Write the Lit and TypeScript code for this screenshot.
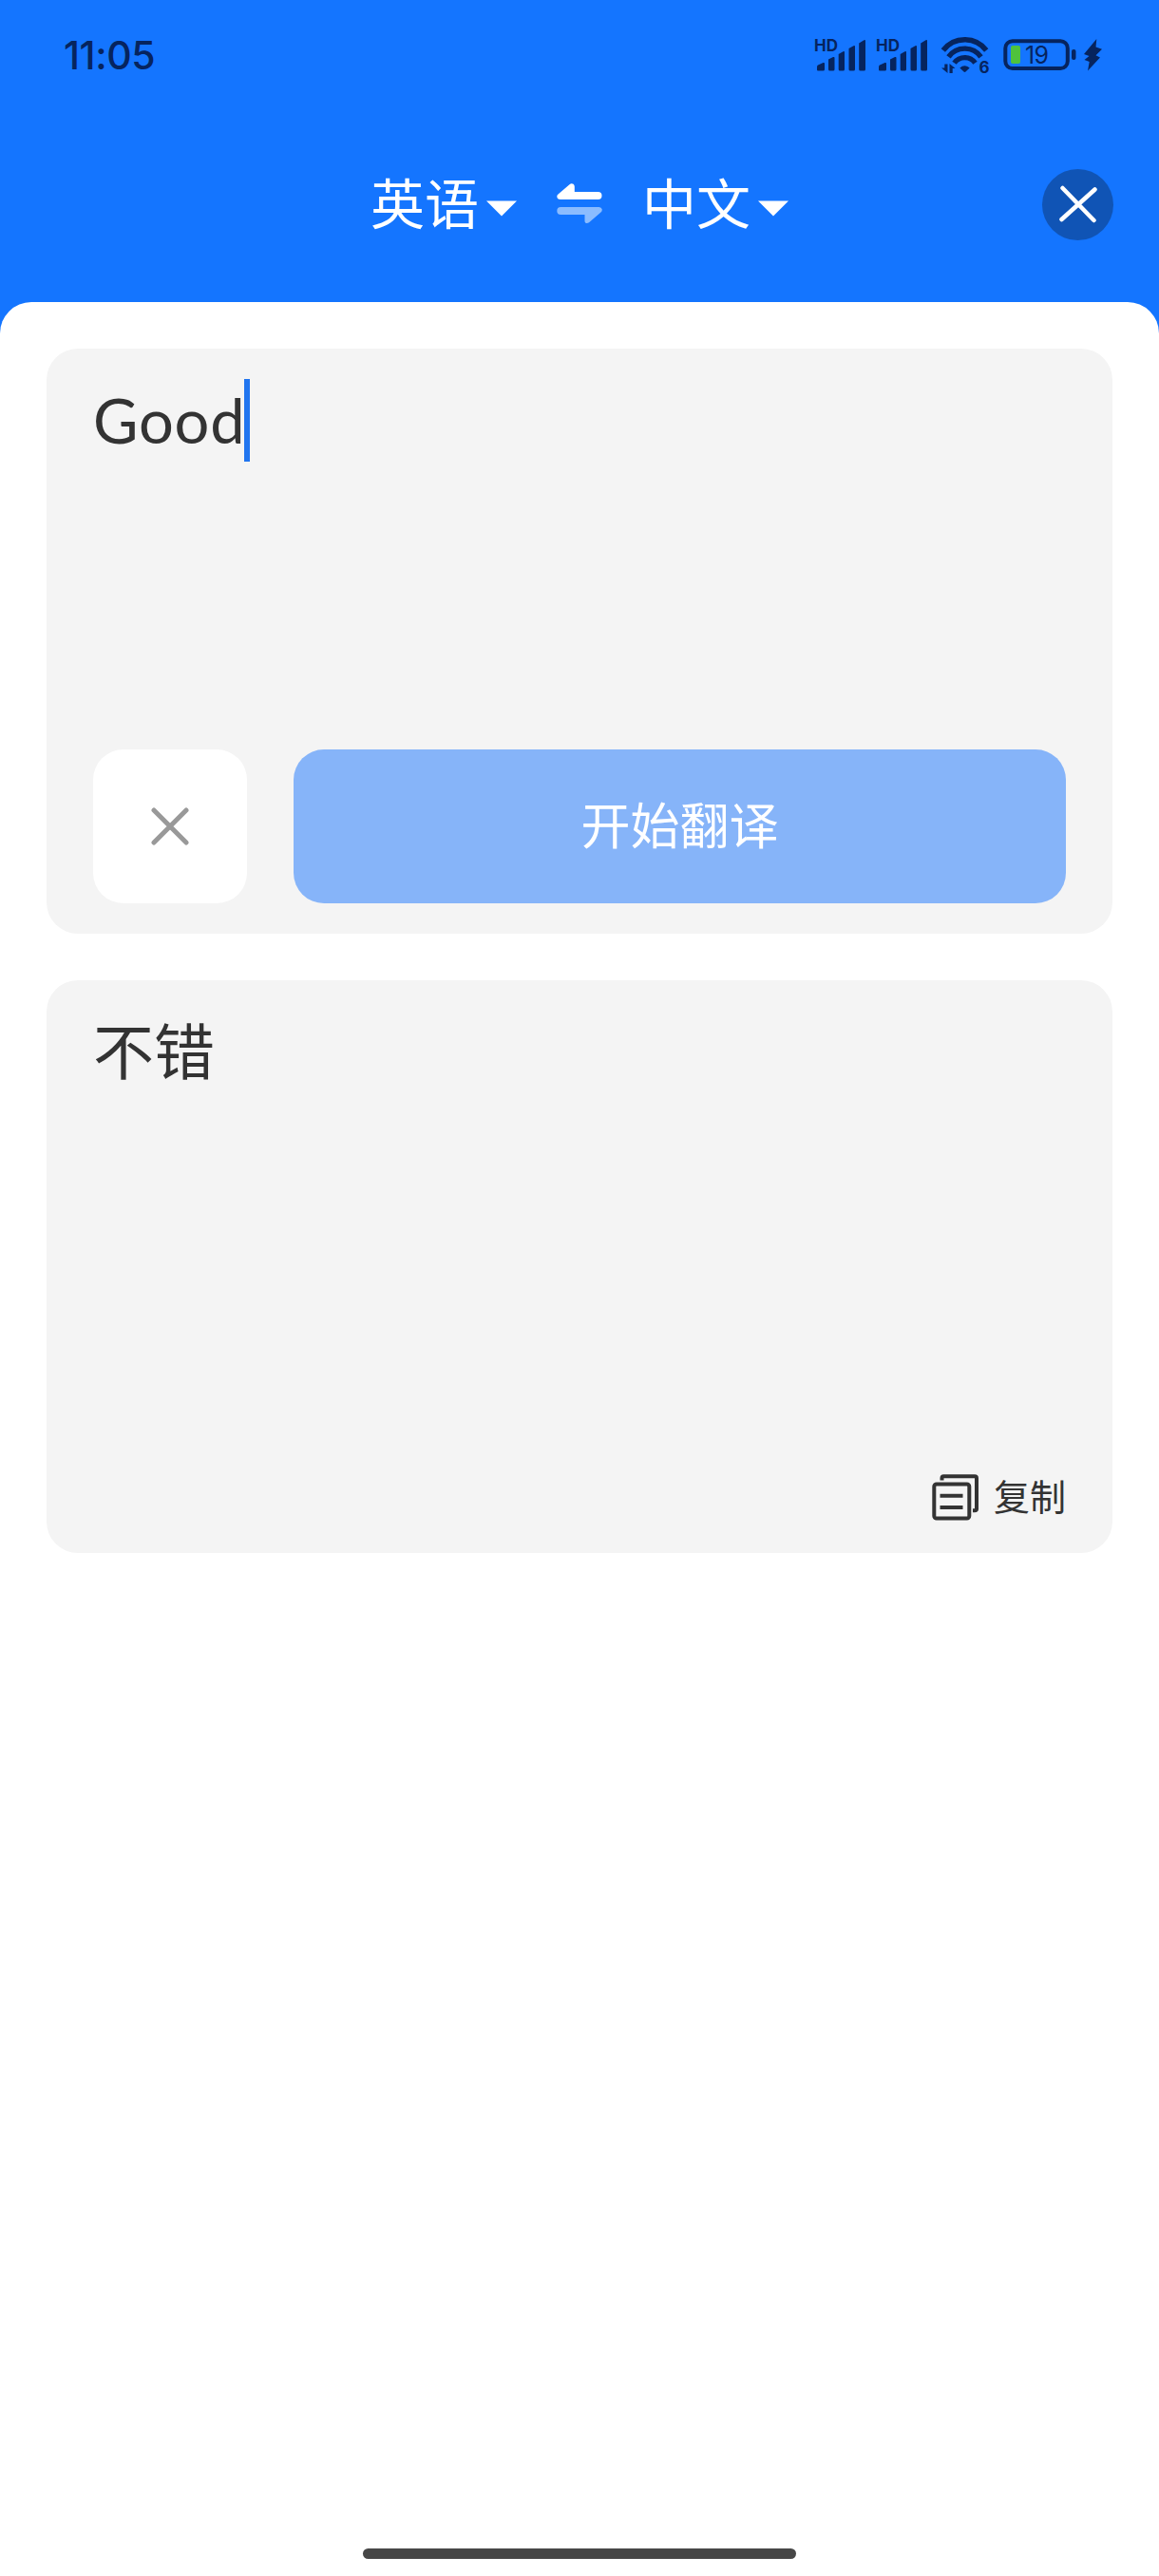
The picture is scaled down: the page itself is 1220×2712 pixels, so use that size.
import { LitElement, html, css } from "lit";
import { customElement, property, state } from "lit/decorators.js";

const signalIcon = html`
  <svg width="56" height="40" viewBox="0 0 56 40">
    <text class="hd" x="0" y="13.500" textLength="25">HD</text>
    <path d="M3 33.500V30.500Q3 29 4 28.500L9.500 26Q11 25.500 11 27V33Q11 34.500 9.500 34.500H4Q3 34.500 3 33.500Z" />
    <path d="M15 22.500L20 20Q21.500 19.500 21.500 21V33Q21.500 34.500 20 34.500H16.500Q15 34.500 15 33Z" />
    <path d="M25.700 17L30.500 14.300Q32 13.500 32 15V33Q32 34.500 30.500 34.500H27.200Q25.700 34.500 25.700 33Z" />
    <path d="M36.500 11L41.500 8.300Q43 7.500 43 9V33Q43 34.500 41.500 34.500H38Q36.500 34.500 36.500 33Z" />
    <path d="M47.200 5.500L52.500 2.300Q54 1.500 54 3V33Q54 34.500 52.500 34.500H48.700Q47.200 34.500 47.200 33Z" />
  </svg>
`;

const wifiIcon = html`
  <svg width="50" height="40" viewBox="0 0 50 40">
    <g fill="none" stroke="currentColor" stroke-width="5.400">
      <path d="M1.800 13A28.500 28.500 0 0 1 47.200 13" />
      <path d="M7.500 19.800A21 21 0 0 1 41.500 19.800" />
      <path d="M13.500 26.300A13.500 13.500 0 0 1 35.500 26.300" />
    </g>
    <path d="M19.300 31.500Q24.500 27 29.700 31.500L25.500 35.500Q24.500 36.300 23.500 35.500Z" />
    <path d="M0 31.500H3.300V27.500H6.500V37Z M8.500 37V27L14.500 32H11.700V37Z" />
    <text class="gen" x="39.500" y="37">6</text>
  </svg>
`;

const batteryIcon = (level: number) => html`
  <svg width="77" height="40" viewBox="0 0 77 40">
    <rect x="2.300" y="3.200" width="65.500" height="28.800" rx="7.500" fill="none" stroke="currentColor" stroke-width="4" />
    <rect x="8" y="8" width="10" height="19" rx="2" fill="#4fc23c" />
    <text class="level" x="23" y="26.500" textLength="25">${level}</text>
    <rect x="72" y="12" width="4.500" height="11" rx="2" />
  </svg>
`;

const boltIcon = html`
  <svg width="22" height="40" viewBox="0 0 22 40">
    <path d="M14.300 1L1 17L6.500 19L1.500 23L6.700 25L5 34.500L18 20.500L13.500 18.300L20 11.700L13.500 9.500Z" />
  </svg>
`;

const swapIcon = html`
  <svg width="48" height="44" viewBox="0 0 48 44">
    <path fill="#fff" d="M1.500 11.500L13.500 1.200Q15.500 -0.500 17.500 0.800Q18.800 1.700 18.800 3.500V9H43.500Q47.500 9 47.500 13T43.500 17H4Q0.500 17 0.300 14Q0.200 12.500 1.500 11.500Z" />
    <path fill="#8bbcff" d="M4.300 25H44.500Q47.300 25 47.800 27.500Q48 29.300 46.500 30.500L34 41.300Q31.800 42.800 30.200 41.500Q29.500 41 29.500 39.500V33H4.300Q0.300 33 0.300 29T4.300 25Z" />
  </svg>
`;

const caretDown = html`<svg class="down" width="32" height="17" viewBox="0 0 32 17"><path d="M0 0.500H32L16 16.500Z" /></svg>`;

const copyIcon = html`
  <svg width="50" height="49" viewBox="0 0 50 49" fill="none" stroke="#333" stroke-width="4">
    <rect x="2.300" y="10.500" width="37" height="36" rx="2.500" />
    <path d="M10.500 6.500V4Q10.500 2.200 12.300 2.200H45Q47 2.200 47 4.200V36.500Q47 38.300 45 38.300H43" />
    <path d="M8.500 22.700H32.500M8.500 35H32.500" />
  </svg>
`;

@customElement("status-bar")
class StatusBar extends LitElement {
  @property() time = "11:05";

  static styles = css`
    :host {
      display: flex;
      justify-content: space-between;
      height: 118px;
      box-sizing: border-box;
      padding: 40px 58px 0 67px;
      color: #06245e;
      font-family: Inter, "Liberation Sans", sans-serif;
    }
    svg { display: block; fill: currentColor; overflow: visible; }
    .time { font-size: 41px; line-height: 37px; font-weight: 500; letter-spacing: -0.4px; }
    .icons { display: flex; }
    .signal { margin-right: 9px; }
    .wifi { margin: 0 15px 0 4px; }
    .bolt { margin-left: 7px; }
    .hd { font-size: 17px; font-weight: 700; }
    .gen { font-size: 17px; font-weight: 700; }
    .level { font-size: 25px; font-weight: 400; }
  `;

  render() {
    return html`
      <div class="time">${this.time}</div>
      <div class="icons">
        <div class="signal">${signalIcon}</div>
        <div class="signal">${signalIcon}</div>
        <div class="wifi">${wifiIcon}</div>
        <div>${batteryIcon(19)}</div>
        <div class="bolt">${boltIcon}</div>
      </div>
    `;
  }
}

@customElement("app-root")
class AppRoot extends LitElement {
  @state() private source = "Good";
  @state() private result = "不错";

  static styles = css`
    :host {
      display: flex;
      flex-direction: column;
      width: 1220px;
      height: 2712px;
      background: #1475ff;
      font-family: "Noto Sans CJK SC", sans-serif;
      color: #333;
    }
    svg { display: block; flex: none; }
    button { border: 0; padding: 0; margin: 0; font: inherit; color: inherit; background: none; }
    .bar {
      display: grid;
      grid-template-columns: 1fr auto 1fr;
      align-items: center;
      height: 200px;
      box-sizing: border-box;
      padding: 0 48px 6px;
    }
    .langs { grid-column: 2; display: flex; align-items: center; color: #fff; }
    .lang { display: flex; align-items: center; font-size: 57px; line-height: 70px; }
    .lang span { padding-bottom: 9px; }
    .down { fill: #fff; margin: 9px 0 0 8px; }
    .swap { margin: 0 42px; }
    .close {
      justify-self: end;
      display: grid;
      place-items: center;
      width: 75px;
      height: 75px;
      border-radius: 50%;
      background: #1054b5;
    }
    .sheet {
      flex: 1;
      display: flex;
      flex-direction: column;
      align-items: stretch;
      gap: 49px;
      padding: 49px 49px 0;
      background: #fff;
      border-radius: 33px 33px 0 0;
    }
    .card {
      display: flex;
      flex-direction: column;
      justify-content: space-between;
      box-sizing: border-box;
      background: #f4f4f4;
      border-radius: 33px;
    }
    .input { height: 616px; padding: 32px 49px 32px; }
    .output { height: 603px; padding: 28px 49px 29px; }
    .source { display: flex; align-items: center; font: 400 65px/87px Lato, "Noto Sans CJK SC", sans-serif; letter-spacing: 0.8px; }
    .cursor { width: 6px; height: 87px; background: #2175ef; margin-left: -1px; }
    .result { font-size: 64px; line-height: 87px; }
    .actions { display: flex; gap: 49px; }
    .clear {
      display: grid;
      place-items: center;
      width: 162px;
      height: 162px;
      border-radius: 32px;
      background: #fff;
    }
    .go {
      flex: 1;
      height: 162px;
      box-sizing: border-box;
      padding-bottom: 6px;
      border-radius: 32px;
      background: #86b4f9;
      color: #fff;
      font-size: 52px;
      line-height: 156px;
    }
    .copy { align-self: flex-end; display: flex; align-items: center; gap: 15px; font-size: 38px; line-height: 56px; margin-bottom: 2px; }
    .copy span { padding-bottom: 4px; line-height: 52px; }
    .home { display: flex; justify-content: center; height: 29px; background: #fff; }
    .pill { width: 456px; height: 11px; border-radius: 6px; background: #474747; }
  `;

  private clear() {
    this.source = "";
    this.result = "";
  }

  render() {
    return html`
      <status-bar></status-bar>
      <header class="bar">
        <div class="langs">
          <button class="lang"><span>英语</span>${caretDown}</button>
          <button class="swap">${swapIcon}</button>
          <button class="lang"><span>中文</span>${caretDown}</button>
        </div>
        <button class="close">
          <svg width="40" height="40" viewBox="0 0 40 40" stroke="#fff" stroke-width="4.500" stroke-linecap="round">
            <path d="M3.500 3L36.500 37M37.500 4.500L2.500 36" />
          </svg>
        </button>
      </header>
      <main class="sheet">
        <section class="card input">
          <div class="source"><span>${this.source}</span><span class="cursor"></span></div>
          <div class="actions">
            <button class="clear" @click=${this.clear}>
              <svg width="40" height="40" viewBox="0 0 40 40" stroke="#999" stroke-width="5" stroke-linecap="round">
                <path d="M3 3L37 37M37 3L3 37" />
              </svg>
            </button>
            <button class="go">开始翻译</button>
          </div>
        </section>
        <section class="card output">
          <div class="result">${this.result}</div>
          <button class="copy">${copyIcon}<span>复制</span></button>
        </section>
      </main>
      <footer class="home"><div class="pill"></div></footer>
    `;
  }
}
